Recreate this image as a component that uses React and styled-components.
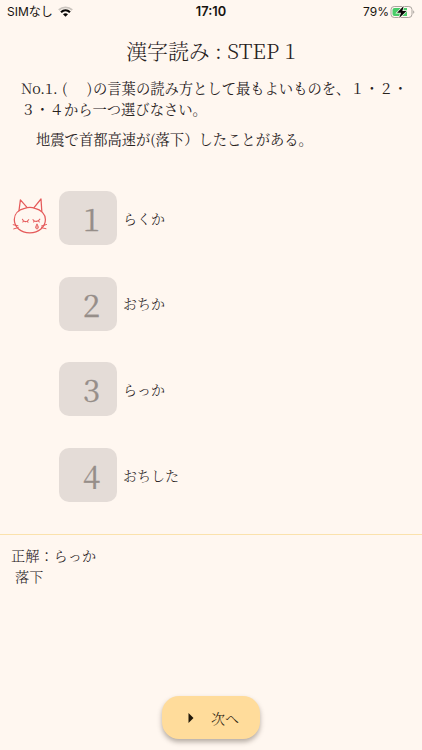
import React from 'react';
import styled, { createGlobalStyle } from 'styled-components';

const GlobalStyle = createGlobalStyle`
  * {
    box-sizing: border-box;
  }

  body {
    margin: 0;
    background-color: #fff7f0;
    color: #28221d;
    font-family: "Noto Serif CJK JP", "Noto Serif JP", "Liberation Serif", "Noto Sans CJK JP", serif;
    font-weight: 300;
  }
`

const Screen = styled.div`
  height: 750px;
  display: flex;
  flex-direction: column;
  overflow: hidden;
`

const StatusBar = styled.header`
  height: 22px;
  flex: none;
  display: grid;
  grid-template-columns: 1fr auto 1fr;
  align-items: center;
  padding: 0 7px;
  color: #17130f;
  font-family: Inter, "Noto Sans CJK JP", sans-serif;
  font-size: 12px;
  font-weight: 400;
  line-height: 22px;
`

const StatusGroup = styled.div`
  display: flex;
  align-items: center;
  justify-content: ${({ $end }) => $end ? 'flex-end' : 'flex-start'};
  gap: ${({ $end }) => $end ? '1px' : '5px'};
`

const Clock = styled.span`
  padding-top: 1px;
  font-size: 12.8px;
  font-weight: 600;
`

const Title = styled.h1`
  flex: none;
  height: 56px;
  margin: 0;
  font-size: 20.9px;
  font-weight: 300;
  line-height: 56px;
  text-align: center;
`

const Question = styled.section`
  flex: none;
  height: 113px;
  padding-left: 21px;
  font-size: 14.3px;
  font-weight: 400;
  line-height: 20.6px;
  white-space: nowrap;
`

const QuestionText = styled.p`
  margin: 0 0 10px;
`

const Lead = styled.span`
  display: inline-block;
  width: ${({ $width }) => $width}px;
`

const Sentence = styled.p`
  margin: 0;
  padding-left: 15px;
`

const Choices = styled.ul`
  flex: none;
  display: flex;
  flex-direction: column;
  gap: 31.7px;
  height: 343px;
  margin: 0;
  padding: 0 0 0 12px;
  list-style: none;
`

const Choice = styled.li`
  display: grid;
  grid-template-columns: 47px 58px 1fr;
  align-items: center;
  height: 54px;
  font-size: 14px;
`

const NumberButton = styled.button`
  height: 54px;
  padding: 0 0 0 7px;
  border: 0;
  border-radius: 10px;
  background-color: #e4dcd7;
  color: #968e89;
  font-family: inherit;
  font-size: 31px;
  font-weight: 400;
  line-height: 50px;
  -webkit-text-stroke: 0.3px #968e89;
`

const ChoiceLabel = styled.span`
  padding: 0 0 1px 6px;
`

const Answer = styled.section`
  flex: 1;
  padding: 10px 11px;
  border-top: 1px solid #fbe2ac;
  font-size: 14.2px;
  line-height: 21px;
`

const AnswerLine = styled.p`
  margin: 0;
  padding-left: ${({ $indent }) => $indent ? '4px' : '0'};
`

const Footer = styled.footer`
  flex: none;
  display: flex;
  justify-content: center;
  height: 54px;
`

const NextButton = styled.button`
  display: flex;
  align-items: center;
  gap: 17px;
  width: 98px;
  height: 43px;
  padding: 0 0 0 26px;
  border: 0;
  border-radius: 17px;
  background-color: #ffdc9b;
  box-shadow: 0 3px 5px rgba(70, 60, 50, 0.4);
  color: #2c2110;
  font-family: inherit;
  font-size: 14px;
  font-weight: 300;
`

const WifiIcon = () => (
  <svg width="15" height="11" viewBox="0 0 15 11" fill="none">
    <path d="M.8 4C4.5.5 10.5.5 14.2 4" stroke="#cbc5bf" strokeWidth="1.9"/>
    <path d="M3 6.2C5.6 3.8 9.4 3.8 12 6.2" stroke="#080706" strokeWidth="2.2"/>
    <path d="M5 8.3C6.5 7 8.5 7 10 8.3L7.5 10.8Z" fill="#080706"/>
  </svg>
)

const BatteryIcon = () => (
  <svg width="25" height="14" viewBox="0 0 25 14">
    <rect x="1" y="1.5" width="21" height="11" rx="3.2" fill="none" stroke="#aaa49e"/>
    <path d="M4.5 3H17V11H4.5Q2.5 11 2.5 9V5Q2.5 3 4.5 3Z" fill="#48cc69"/>
    <path d="M23.2 5.2Q25.5 7 23.2 8.8Z" fill="#aaa49e"/>
    <path d="M13.7 1L7 7.8H11L9.2 13L16.5 6H12.4Z" fill="#080706" stroke="#fff7f0" strokeWidth="1.4" paintOrder="stroke"/>
  </svg>
)

const CatIcon = () => (
  <svg width="37" height="38" viewBox="0 0 37 38" fill="none" stroke="#e55b5b" strokeWidth="1.25" strokeLinecap="round" strokeLinejoin="round">
    <path d="M12.6 11.4C16 10.2 20 10.2 23 11.4C29 12.7 33.4 17 33.4 22.6C33.4 30 26.8 35.8 17.8 35.8C8.5 35.8 2.3 30 2.3 22.5C2.3 17 6.4 12.8 12.6 11.4Z"/>
    <path d="M7 13.7L8.4 2.8L15 10.4M22 10.6L29 2L29.8 14.4"/>
    <path d="M10.4 22.2C11.2 25.3 15 25.3 16.7 22.7M21 22.7C22.5 25 26.3 25 27.8 22.2M11.6 24L10.8 25M15.3 24.2L16 25.2M22.3 24L21.6 25M26.5 24L27.3 25" strokeWidth="1.1"/>
    <path d="M25 27.3C23.4 29.6 22.9 31.6 25 31.8C27 31.7 26.6 29.5 25 27.3Z" fill="#f2aaa5" strokeWidth="1"/>
    <path d="M1.2 27.7L6 28.8M1.7 31.9L6.2 30.6M34.5 27.5L29.5 29M34 31.7L29.4 30.7" strokeWidth="1"/>
  </svg>
)

const PlayIcon = () => (
  <svg width="6" height="10" viewBox="0 0 6 10">
    <path d="M.5 0L5.5 5L.5 10Z" fill="#21180a"/>
  </svg>
)

const choices = ['らくか', 'おちか', 'らっか', 'おちした'];

function App () {
  // index of the choice the user picked
  const selected = 0;

  return (
    <Screen>
      <GlobalStyle/>
      <StatusBar>
        <StatusGroup>
          <span>SIMなし</span>
          <WifiIcon/>
        </StatusGroup>
        <Clock>17:10</Clock>
        <StatusGroup $end>
          <span>79%</span>
          <BatteryIcon/>
        </StatusGroup>
      </StatusBar>
      <Title>漢字読み : STEP 1</Title>
      <Question>
        <QuestionText>
          <Lead $width={41}>No.1.</Lead><Lead $width={25}>(</Lead><Lead $width={6}>)</Lead>の言葉の読み方として最もよいものを、１・２・<br/>３・４から一つ選びなさい。
        </QuestionText>
        <Sentence>地震で首都高速が(落下）したことがある。</Sentence>
      </Question>
      <Choices>
        {choices.map((label, index) => (
          <Choice key={label}>
            <div>{index === selected && <CatIcon/>}</div>
            <NumberButton>{index + 1}</NumberButton>
            <ChoiceLabel>{label}</ChoiceLabel>
          </Choice>
        ))}
      </Choices>
      <Answer>
        <AnswerLine>正解：らっか</AnswerLine>
        <AnswerLine $indent>落下</AnswerLine>
      </Answer>
      <Footer>
        <NextButton><PlayIcon/>次へ</NextButton>
      </Footer>
    </Screen>
  )
}

export default App;
